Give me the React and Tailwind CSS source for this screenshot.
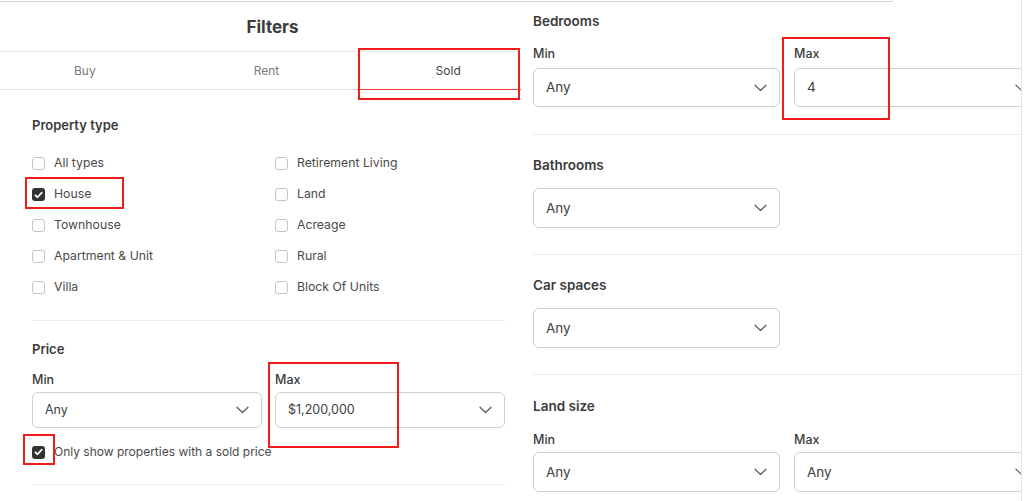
import React from "react";

const FONT = { fontFamily: "Inter, 'Noto Sans', sans-serif" };

/* ---------- bits ---------- */
function Chevron({ className = "" }) {
  return (
    <svg width="13" height="8" viewBox="0 0 13 8" fill="none" className={className}>
      <path d="M1 1.2l5.5 5.3 5.5-5.3" stroke="#5a5a5a" strokeWidth="1.2" strokeLinecap="round" strokeLinejoin="round" />
    </svg>
  );
}

function Box({ checked }) {
  return checked ? (
    <span className="flex h-[13px] w-[13px] shrink-0 items-center justify-center rounded-[3px] bg-[#333]">
      <svg width="9" height="8" viewBox="0 0 9 8" fill="none">
        <path d="M1.3 4.2l2.2 2.1L7.8 1.6" stroke="#fff" strokeWidth="1.6" strokeLinecap="round" strokeLinejoin="round" />
      </svg>
    </span>
  ) : (
    <span className="h-[13px] w-[13px] shrink-0 rounded-[3px] border border-[#c4c4c4] bg-white" />
  );
}

function Select({ value, h = "h-[36px]", big }) {
  return (
    <div className={`flex items-center justify-between rounded-[6px] border border-[#cfcfcf] bg-white px-[12px] ${h}`}>
      <span className={`${big ? "text-[13.5px]" : "text-[12.5px]"} text-[#404040]`}>{value}</span>
      <Chevron />
    </div>
  );
}

const TYPES_L = ["All types", "House", "Townhouse", "Apartment & Unit", "Villa"];
const TYPES_R = ["Retirement Living", "Land", "Acreage", "Rural", "Block Of Units"];

/* ---------- left screenshot ---------- */
function LeftPanel() {
  return (
    <div className="relative w-[521px] shrink-0 overflow-hidden">
      <div className="-ml-[6px] w-[545px]">
        <div className="flex h-[52px] items-center justify-center border-b border-[#e6e6e6] pl-[12px] pt-[4px]">
          <span className="text-[17px] font-bold text-[#3b3b3b]">Filters</span>
        </div>
        <div className="grid h-[38px] grid-cols-3 border-b border-[#e6e6e6] pt-[1px] text-[12px]">
          <div className="flex items-center justify-center text-[#7a7a7a]">Buy</div>
          <div className="flex items-center justify-center text-[#7a7a7a]">Rent</div>
          <div className="-mb-px flex items-center justify-center border-b-[1.5px] border-[#f23b3b] text-[#424242]">Sold</div>
        </div>

        <div className="ml-[38px] w-[473px]">
          <div className="border-b border-[#ececec] pb-[17px] pt-[26px]">
            <div className="text-[13px] font-semibold leading-[18px] text-[#3b3b3b]">Property type</div>
            <div className="mt-[14px] grid grid-cols-2 gap-x-[13px]">
              <div>
                {TYPES_L.map((t) => (
                  <div key={t} className="flex h-[31px] items-center gap-[9px] text-[12.25px] text-[#4a4a4a]">
                    <Box checked={t === "House"} />
                    <span>{t}</span>
                  </div>
                ))}
              </div>
              <div>
                {TYPES_R.map((t) => (
                  <div key={t} className="flex h-[31px] items-center gap-[9px] text-[12.25px] text-[#4a4a4a]">
                    <Box />
                    <span>{t}</span>
                  </div>
                ))}
              </div>
            </div>
          </div>

          <div className="border-b border-[#ececec] pb-[22px] pt-[19px]">
            <div className="text-[13px] font-semibold leading-[18px] text-[#3b3b3b]">Price</div>
            <div className="mt-[14px] grid grid-cols-2 gap-x-[13px]">
              <div>
                <div className="text-[12.5px] font-medium leading-[16px] text-[#3b3b3b]">Min</div>
                <div className="mt-[4px]">
                  <Select value="Any" />
                </div>
              </div>
              <div>
                <div className="text-[12.5px] font-medium leading-[16px] text-[#3b3b3b]">Max</div>
                <div className="mt-[4px]">
                  <Select value="$1,200,000" />
                </div>
              </div>
            </div>
            <div className="mt-[14px] flex h-[20px] items-center gap-[9px] text-[12px] text-[#4a4a4a]">
              <Box checked />
              <span>Only show properties with a sold price</span>
            </div>
          </div>
        </div>
      </div>
    </div>
  );
}

/* ---------- right screenshot ---------- */
function Heading({ children }) {
  return <div className="text-[13.5px] font-semibold leading-[20px] text-[#3b3b3b]">{children}</div>;
}

function Label({ children }) {
  return <div className="text-[12.5px] font-medium leading-[18px] text-[#3b3b3b]">{children}</div>;
}

function MinMax({ max = "Any", gap = "mt-[14px]", h = "h-[39px]", inner = "mt-[5px]" }) {
  return (
    <div className={`${gap} flex gap-[14px]`}>
      <div className="w-[247px] shrink-0">
        <Label>Min</Label>
        <div className={inner}>
          <Select value="Any" h={h} big />
        </div>
      </div>
      <div className="w-[247px] shrink-0">
        <Label>Max</Label>
        <div className={inner}>
          <Select value={max} h={h} big />
        </div>
      </div>
    </div>
  );
}

function Single({ title }) {
  return (
    <div className="border-b border-[#ececec] pb-[26px] pt-[20px]">
      <Heading>{title}</Heading>
      <div className="mt-[13px] w-[247px]">
        <Select value="Any" h="h-[40px]" big />
      </div>
    </div>
  );
}

function RightPanel() {
  return (
    <div className="w-[501px] shrink-0 overflow-hidden border-r border-[#e4e4e4]">
      <div className="ml-[12px] w-[520px]">
        <div className="border-b border-[#ececec] pb-[27px] pt-[11px]">
          <Heading>Bedrooms</Heading>
          <MinMax max="4" />
        </div>
        <Single title="Bathrooms" />
        <Single title="Car spaces" />
        <div className="pt-[21px]">
          <Heading>Land size</Heading>
          <MinMax gap="mt-[15px]" h="h-[40px]" inner="mt-[3px]" />
        </div>
      </div>
    </div>
  );
}

/* ---------- annotation boxes ---------- */
const MARKS = [
  "left-[358px] top-[48px] w-[162px] h-[52px]",
  "left-[25px] top-[177px] w-[99px] h-[32px]",
  "left-[268px] top-[362px] w-[131px] h-[86px]",
  "left-[23px] top-[434px] w-[32px] h-[31px]",
  "left-[782px] top-[37px] w-[108px] h-[83px]",
];

export default function App() {
  return (
    <div className="relative flex h-[501px] w-[1024px] overflow-hidden bg-white" style={FONT}>
      <LeftPanel />
      <RightPanel />
      <div className="absolute left-0 top-[1px] h-px w-[893px] bg-[#d2d2d2]" />
      {MARKS.map((m) => (
        <div key={m} className={`pointer-events-none absolute border-2 border-[#f01d1d] ${m}`} />
      ))}
    </div>
  );
}
